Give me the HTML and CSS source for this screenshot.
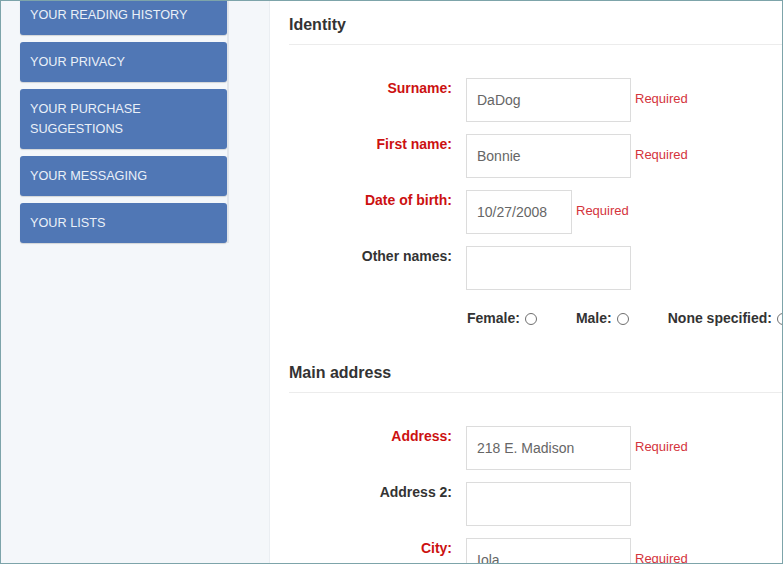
FILE: index.html
```html
<!DOCTYPE html>
<html>
<head>
<meta charset="utf-8">
<link rel="stylesheet" href="styles.css">
</head>
<body>
<div class="frame">
  <aside class="sidebar">
    <ul class="menu">
      <li class="menu-item">Your reading history</li>
      <li class="menu-item">Your privacy</li>
      <li class="menu-item">Your purchase suggestions</li>
      <li class="menu-item">Your messaging</li>
      <li class="menu-item">Your lists</li>
    </ul>
  </aside>
  <main class="main">
    <h3 class="section-title">Identity</h3>
    <div class="rows">
      <div class="row">
        <label class="label required">Surname:</label>
        <div class="input">DaDog</div>
        <span class="req">Required</span>
      </div>
      <div class="row">
        <label class="label required">First name:</label>
        <div class="input">Bonnie</div>
        <span class="req">Required</span>
      </div>
      <div class="row">
        <label class="label required">Date of birth:</label>
        <div class="input input-date">10/27/2008</div>
        <span class="req">Required</span>
      </div>
      <div class="row">
        <label class="label">Other names:</label>
        <div class="input"></div>
      </div>
    </div>
    <div class="gender">
      <span class="opt">Female:<span class="radio"></span></span>
      <span class="opt">Male:<span class="radio"></span></span>
      <span class="opt">None specified:<span class="radio"></span></span>
    </div>
    <h3 class="section-title second">Main address</h3>
    <div class="rows">
      <div class="row">
        <label class="label required">Address:</label>
        <div class="input">218 E. Madison</div>
        <span class="req">Required</span>
      </div>
      <div class="row">
        <label class="label">Address 2:</label>
        <div class="input"></div>
      </div>
      <div class="row">
        <label class="label required">City:</label>
        <div class="input">Iola</div>
        <span class="req">Required</span>
      </div>
    </div>
  </main>
</div>
</body>
</html>
```
FILE: styles.css
```css
* { box-sizing: border-box; }
html, body { margin: 0; padding: 0; background: #fff; }
body { font-family: "Liberation Sans", Arial, sans-serif; }

.frame {
  width: 783px;
  height: 564px;
  border: 1px solid #7da4aa;
  display: flex;
  overflow: hidden;
  background: #fff;
}

.sidebar {
  width: 269px;
  flex: none;
  background: #f4f7fa;
  border-right: 1px solid #eaeef2;
  padding-left: 19px;
}

.menu {
  list-style: none;
  margin: -6px 0 0 0;
  padding: 0;
  width: 209px;
  border-right: 2px solid #e2e6eb;
}

.menu-item {
  width: 207px;
  background: #5077b5;
  color: #eaf0f8;
  text-transform: uppercase;
  font-size: 12.7px;
  line-height: 20px;
  padding: 10px 10px;
  border-radius: 3px;
  margin-bottom: 7px;
  box-shadow: 0 1px 1px rgba(0,0,0,0.14);
}
.menu-item:last-child { margin-bottom: 0; }

.main {
  flex: 1;
  min-width: 0;
  padding-left: 19px;
  overflow: hidden;
}

.section-title {
  margin: 0;
  font-size: 16px;
  line-height: 20px;
  font-weight: bold;
  color: #333;
  padding: 14px 0 9px;
  border-bottom: 1px solid #ececec;
}
.section-title.second { margin-top: 21px; }

.rows {
  margin-top: 33px;
  display: flex;
  flex-direction: column;
  gap: 12px;
}

.row {
  display: flex;
  align-items: flex-start;
}

.label {
  width: 163px;
  margin-right: 14px;
  text-align: right;
  font-size: 14px;
  font-weight: bold;
  line-height: 20px;
  color: #333;
}
.label.required { color: #cc1111; }

.input {
  width: 165px;
  height: 44px;
  border: 1px solid #dcdcdc;
  padding: 0 10px;
  font-size: 14px;
  line-height: 42px;
  color: #666;
  white-space: nowrap;
}
.input-date { width: 106px; }

.req {
  margin-left: 4px;
  font-size: 13px;
  line-height: 20px;
  padding-top: 11px;
  color: #d4343c;
}

.gender {
  margin-top: 18px;
  padding-left: 178px;
  display: flex;
  gap: 39px;
  white-space: nowrap;
  font-size: 14px;
  font-weight: bold;
  line-height: 20px;
  color: #333;
}

.opt {
  display: inline-flex;
  align-items: center;
}

.radio {
  display: inline-block;
  width: 12px;
  height: 12px;
  border: 1px solid #6f6f6f;
  border-radius: 50%;
  margin-left: 5px;
  margin-top: 1px;
  background: #fff;
}
```
